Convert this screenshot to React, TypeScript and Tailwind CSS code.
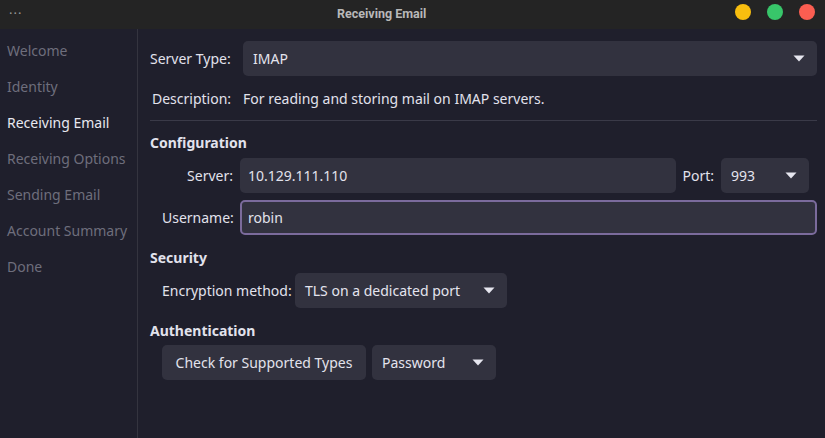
import React from 'react';

const font = { fontFamily: '"Noto Sans", "Open Sans", sans-serif' };

const steps = [
    'Welcome',
    'Identity',
    'Receiving Email',
    'Receiving Options',
    'Sending Email',
    'Account Summary',
    'Done',
];

const Caret: React.FC = () => (
    <svg width="12" height="7" viewBox="0 0 12 7" className="shrink-0">
        <path d="M0.5 0.5 L11.5 0.5 L6 6.5 Z" fill="#e6e6ef" />
    </svg>
);

const Select: React.FC<{ value: string; className?: string }> = ({ value, className = '' }) => (
    <div className={`h-[35px] rounded-[5px] bg-[#32323f] flex items-center justify-between pl-[10px] pr-[12px] text-[#e4e4ee] ${className}`}>
        <span>{value}</span>
        <Caret />
    </div>
);

export default function App() {
    return (
        <div className="w-[825px] h-[438px] flex flex-col bg-[#1f1f2c] text-[14px] overflow-hidden" style={font}>
            {/* title bar */}
            <div className="h-[29px] shrink-0 bg-[#242424] flex items-center relative">
                <span className="pl-[9px] text-[#9a9a9a] text-[13px] tracking-[1px] leading-none -mt-[10px]">...</span>
                <span
                    className="absolute left-[337px] top-[5px] text-[12.5px] font-bold text-[#b8b8b8]"
                    style={{ fontFamily: '"Liberation Sans Narrow", "Roboto", sans-serif' }}
                >
                    Receiving Email
                </span>
                <div className="ml-auto flex items-center gap-[16px] pr-[10px] -mt-[5px]">
                    <div className="w-[16px] h-[16px] rounded-full bg-[#f8be0f]" />
                    <div className="w-[16px] h-[16px] rounded-full bg-[#38c66a]" />
                    <div className="w-[16px] h-[16px] rounded-full bg-[#fb5e51]" />
                </div>
            </div>

            <div className="flex flex-1 min-h-0">
                {/* sidebar */}
                <div className="w-[138px] shrink-0 border-r border-[#34343f] pt-[3px] flex flex-col">
                    {steps.map((s) => (
                        <div
                            key={s}
                            className={`h-[36px] pl-[7px] flex items-center ${s === 'Receiving Email' ? 'text-[#e8e8f0]' : 'text-[#6e6e7c]'}`}
                        >
                            {s}
                        </div>
                    ))}
                </div>

                {/* content */}
                <div className="flex-1 pl-[12px] pr-[8px] pt-[12px] text-[#e2e2ec]">
                    <div className="flex items-center">
                        <span className="w-[93px]">Server Type:</span>
                        <Select value="IMAP" className="flex-1" />
                    </div>
                    <div className="flex items-center mt-[10px] h-[24px]">
                        <span className="w-[93px] pl-[2px]">Description:</span>
                        <span>For reading and storing mail on IMAP servers.</span>
                    </div>
                    <div className="mt-[10px] border-t border-[#3a3a48]" />

                    <div className="mt-[11px] font-bold">Configuration</div>
                    <div className="pl-[12px] mt-[5px] flex flex-col gap-[7px]">
                        <div className="flex items-center">
                            <span className="w-[78px] pr-[7px] text-right">Server:</span>
                            <div className="flex-1 h-[35px] rounded-[5px] bg-[#32323f] flex items-center px-[8px]">10.129.111.110</div>
                            <span className="pl-[6px] pr-[7px]">Port:</span>
                            <Select value="993" className="w-[88px] mr-[8px]" />
                        </div>
                        <div className="flex items-center">
                            <span className="w-[78px] pr-[7px] text-right">Username:</span>
                            <div className="flex-1 h-[35px] rounded-[5px] bg-[#32323f] border-2 border-[#7b6b9c] flex items-center px-[6px]">robin</div>
                        </div>
                    </div>

                    <div className="mt-[12px] font-bold">Security</div>
                    <div className="pl-[12px] mt-[5px] flex items-center">
                        <span className="w-[133px]">Encryption method:</span>
                        <Select value="TLS on a dedicated port" className="w-[212px]" />
                    </div>

                    <div className="mt-[12px] font-bold">Authentication</div>
                    <div className="pl-[12px] mt-[4px] flex items-center gap-[6px]">
                        <div className="h-[35px] w-[204px] rounded-[5px] bg-[#32323f] flex items-center justify-center">Check for Supported Types</div>
                        <Select value="Password" className="w-[124px]" />
                    </div>
                </div>
            </div>
        </div>
    );
}
